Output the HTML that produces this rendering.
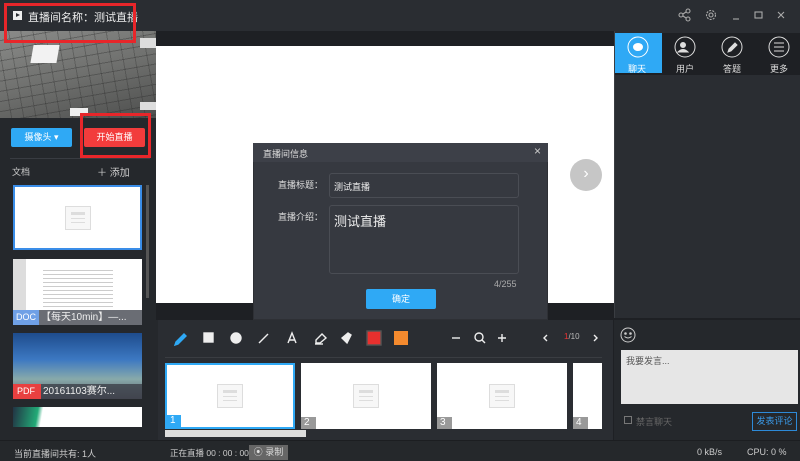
<!DOCTYPE html>
<html><head><meta charset="utf-8"><style>
*{margin:0;padding:0;box-sizing:border-box}
body{width:800px;height:461px;overflow:hidden;background:#25282c;font-family:"Liberation Sans","Noto Sans CJK SC",sans-serif;font-size:9px;color:#ddd;position:relative}
.a{position:absolute;white-space:nowrap}
.doc{background:#fff}
.ph{position:absolute;left:50%;top:50%;width:26px;height:24px;margin:-12px 0 0 -13px;border:1px solid #ddd;background:#f7f7f7}
.ph:before{content:"";position:absolute;left:5px;top:5px;width:14px;height:3px;background:#ddd}
.ph:after{content:"";position:absolute;left:5px;top:11px;width:14px;height:1px;background:#ddd;box-shadow:0 4px 0 #ddd}
</style></head><body>
<!-- title bar -->
<div class="a" style="left:0;top:0;width:800px;height:31px;background:#2a2d32"></div>
<div class="a" style="left:13px;top:11px;width:9px;height:9px;background:#eee"></div>
<div class="a" style="left:16px;top:13px;width:0;height:0;border-left:4px solid #2a2d32;border-top:2.5px solid transparent;border-bottom:2.5px solid transparent"></div>
<div class="a" style="left:28px;top:9px;font-size:11px;color:#eee">直播间名称：测试直播</div>
<svg class="a" style="left:676px;top:7px" width="124" height="18" viewBox="0 0 124 18" fill="none" stroke="#aaa" stroke-width="1.1">
<circle cx="5" cy="8" r="2"/><circle cx="12" cy="4" r="2"/><circle cx="12" cy="12" r="2"/><path d="M7 7l3-2M7 9l3 2"/>
<circle cx="35" cy="8" r="2"/><circle cx="35" cy="8" r="4.5" stroke-dasharray="2 1.2"/>
<path d="M57 12h6"/><rect x="79" y="5" width="7" height="6"/><path d="M102 5l6 6M108 5l-6 6"/>
</svg>
<!-- left panel -->
<div class="a" style="left:0;top:31px;width:156px;height:87px;background:repeating-linear-gradient(170deg,transparent 0,transparent 9px,rgba(40,40,40,.35) 9px,rgba(40,40,40,.35) 10px),repeating-linear-gradient(80deg,transparent 0,transparent 11px,rgba(40,40,40,.3) 11px,rgba(40,40,40,.3) 12px),linear-gradient(165deg,#8a8b89,#6f706e 50%,#4e4f4e 100%)"></div>
<div class="a" style="left:32px;top:45px;width:26px;height:18px;background:#f2f2f2;transform:skewX(-10deg)"></div>
<div class="a" style="left:140px;top:38px;width:16px;height:10px;background:#ddd"></div>
<div class="a" style="left:70px;top:108px;width:18px;height:8px;background:#eee"></div>
<div class="a" style="left:140px;top:102px;width:16px;height:8px;background:#ddd"></div>
<div class="a" style="left:11px;top:128px;width:61px;height:19px;background:#2fa9f5;border-radius:2px;color:#fff;text-align:center;line-height:19px">摄像头 ▾</div>
<div class="a" style="left:84px;top:128px;width:61px;height:19px;background:#f23c3c;border-radius:2px;color:#fff;text-align:center;line-height:19px">开始直播</div>
<div class="a" style="left:80px;top:113px;width:71px;height:45px;border:3px solid #e8262a"></div>
<div class="a" style="left:4px;top:3px;width:132px;height:40px;border:3px solid #e8262a"></div>
<div class="a" style="left:10px;top:158px;width:140px;height:1px;background:#393c42"></div>
<div class="a" style="left:12px;top:165px;color:#ccc">文档</div>
<div class="a" style="left:97px;top:164px;color:#ccc;font-size:10px">＋ 添加</div>
<div class="a" style="left:146px;top:185px;width:3px;height:113px;background:#555"></div>
<div class="a doc" style="left:13px;top:185px;width:129px;height:65px;border:2px solid #3a8de8"><div class="ph"></div></div>
<div class="a doc" style="left:13px;top:259px;width:129px;height:66px;background:linear-gradient(90deg,#ddd 0,#ddd 13px,#fff 13px)">
<div class="a" style="left:30px;top:8px;width:70px;height:40px;background:repeating-linear-gradient(#fff 0,#fff 3px,#ccc 3px,#ccc 4px)"></div>
<div class="a" style="left:0;bottom:0;width:129px;height:15px;background:rgba(80,84,92,.85);color:#eee;font-size:10px;line-height:15px;padding-left:28px">【每天10min】—...</div>
<div class="a" style="left:0;bottom:0;width:26px;height:15px;background:#6fa0e6;color:#fff;line-height:15px;padding-left:3px">DOC</div></div>
<div class="a" style="left:13px;top:333px;width:129px;height:66px;background:linear-gradient(#1e4c8c,#3c78c2 40%,#8aa 70%,#556)">
<div class="a" style="left:0;bottom:0;width:129px;height:15px;background:rgba(60,64,72,.8);color:#eee;font-size:10px;line-height:15px;padding-left:30px">20161103赛尔...</div>
<div class="a" style="left:0;bottom:0;width:28px;height:15px;background:#e84040;color:#fff;line-height:15px;padding-left:4px">PDF</div></div>
<div class="a doc" style="left:13px;top:407px;width:129px;height:20px;background:linear-gradient(100deg,#234 0,#2a7 25px,#fff 30px)"></div>
<!-- center -->
<div class="a" style="left:156px;top:31px;width:458px;height:289px;background:#1e2024"></div>
<div class="a" style="left:156px;top:46px;width:458px;height:257px;background:#fff"></div>
<div class="a" style="left:570px;top:159px;width:32px;height:32px;border-radius:50%;background:#c6c6c6;color:#fff;text-align:center;line-height:30px;font-size:16px">›</div>
<div class="a" style="left:158px;top:320px;width:456px;height:120px;background:#2a2d32"></div>
<svg class="a" style="left:170px;top:328px" width="440" height="20" viewBox="0 0 440 20" fill="none" stroke="#eee" stroke-width="1.4">
<path d="M6 14l8-8 2 2-8 8-3 1z" fill="#2fa9f5" stroke="#2fa9f5"/>
<rect x="34" y="5" width="9" height="9" fill="#eee"/><circle cx="66" cy="10" r="5" fill="#eee"/>
<path d="M89 15l9-9"/><path d="M118 15l4-10 4 10M119.5 12h5"/>
<path d="M146 12l6-6 4 4-6 5h-4z"/><path d="M145 16h8"/>
<path d="M172 10l5 5 4-8-3-2z" fill="#eee"/>
<rect x="197" y="3" width="14" height="14" fill="#e8302e" stroke="#555"/>
<rect x="224" y="3" width="14" height="14" fill="#f48a2e" stroke="none"/>
<path d="M282 10h8"/><circle cx="309" cy="9" r="4"/><path d="M312 12l3 3"/><path d="M328 10h8M332 6v8"/>
<path d="M377 7l-3 3 3 3"/><path d="M424 7l3 3-3 3"/>
</svg>
<div class="a" style="left:564px;top:332px;font-size:8px;color:#bbb"><span style="color:#e33">1</span>/10</div>
<div class="a" style="left:165px;top:357px;width:437px;height:1px;background:#3a3d42"></div>
<div class="a doc" style="left:165px;top:363px;width:130px;height:66px;border:2px solid #2fa9f5"><div class="ph"></div><div class="a" style="left:0;bottom:0;width:14px;height:12px;background:#2fa9f5;color:#fff;font-size:10px;padding-left:3px">1</div></div>
<div class="a doc" style="left:301px;top:363px;width:130px;height:66px"><div class="ph"></div><div class="a" style="left:0;bottom:0;width:15px;height:12px;background:#999;color:#fff;font-size:10px;padding-left:3px">2</div></div>
<div class="a doc" style="left:437px;top:363px;width:130px;height:66px"><div class="ph"></div><div class="a" style="left:0;bottom:0;width:15px;height:12px;background:#999;color:#fff;font-size:10px;padding-left:3px">3</div></div>
<div class="a doc" style="left:573px;top:363px;width:29px;height:66px"><div class="a" style="left:0;bottom:0;width:15px;height:12px;background:#999;color:#fff;font-size:10px;padding-left:3px">4</div></div>
<div class="a" style="left:165px;top:430px;width:141px;height:7px;background:#ddd"></div>
<!-- dialog -->
<div class="a" style="left:253px;top:143px;width:295px;height:177px;background:#363940;border:1px solid #2e3035"></div>
<div class="a" style="left:253px;top:143px;width:295px;height:19px;background:#3d4048"></div>
<div class="a" style="left:263px;top:147px;color:#ddd">直播间信息</div>
<div class="a" style="left:534px;top:144px;color:#ccc;font-size:12px">×</div>
<div class="a" style="left:278px;top:178px;color:#ddd">直播标题：</div>
<div class="a" style="left:329px;top:173px;width:190px;height:25px;border:1px solid #4a4d54;border-radius:3px;color:#eee;padding:6px 4px">测试直播</div>
<div class="a" style="left:278px;top:210px;color:#ddd">直播介绍：</div>
<div class="a" style="left:329px;top:205px;width:190px;height:69px;border:1px solid #4a4d54;border-radius:3px;color:#eee;font-size:13px;padding:5px 4px">测试直播</div>
<div class="a" style="left:494px;top:279px;color:#aaa">4/255</div>
<div class="a" style="left:366px;top:289px;width:70px;height:20px;background:#2fa9f5;border-radius:2px;color:#fff;text-align:center;line-height:20px">确定</div>
<!-- right -->
<div class="a" style="left:614px;top:31px;width:186px;height:289px;background:#2a2d32;border-left:1px solid #3a3d42"></div>
<div class="a" style="left:615px;top:33px;width:185px;height:42px;background:#1e2024"></div>
<div class="a" style="left:615px;top:33px;width:47px;height:40px;background:#2fa9f5"></div>
<svg class="a" style="left:615px;top:33px" width="185" height="40" viewBox="0 0 185 40" fill="none" stroke="#ddd" stroke-width="1">
<circle cx="23" cy="14" r="10" stroke="#fff"/><ellipse cx="23" cy="14" rx="5" ry="4" fill="#fff" stroke="none"/>
<circle cx="70" cy="14" r="10"/><circle cx="68" cy="12" r="2.5" fill="#ddd"/><path d="M63 19q5-5 10 0z" fill="#ddd"/>
<circle cx="117" cy="14" r="10"/><path d="M113 19l1-3 6-6 2 2-6 6z" fill="#ddd"/>
<circle cx="164" cy="14" r="10"/><path d="M159 10h10M159 14h10M159 18h10"/>
</svg>
<div class="a" style="left:628px;top:62px;color:#fff">聊天</div>
<div class="a" style="left:676px;top:62px;color:#ddd">用户</div>
<div class="a" style="left:723px;top:62px;color:#ddd">答题</div>
<div class="a" style="left:770px;top:62px;color:#ddd">更多</div>
<div class="a" style="left:614px;top:318px;width:186px;height:2px;background:#1e2024"></div>
<div class="a" style="left:613px;top:320px;width:1px;height:120px;background:#1e2024"></div>
<svg class="a" style="left:620px;top:327px" width="16" height="16" viewBox="0 0 16 16" fill="none" stroke="#ccc"><circle cx="8" cy="8" r="7"/><circle cx="5.5" cy="6.5" r=".8" fill="#ccc"/><circle cx="10.5" cy="6.5" r=".8" fill="#ccc"/><path d="M4.5 9.5q3.5 3 7 0"/></svg>
<div class="a" style="left:621px;top:350px;width:177px;height:54px;background:#e6e6e6;color:#555;padding:4px 5px">我要发言...</div>
<div class="a" style="left:624px;top:416px;width:8px;height:8px;border:1px solid #777"></div>
<div class="a" style="left:636px;top:415px;color:#666">禁言聊天</div>
<div class="a" style="left:752px;top:412px;width:45px;height:19px;border:1px solid #2d8ad8;color:#3a9ae8;text-align:center;line-height:17px">发表评论</div>
<!-- status -->
<div class="a" style="left:0;top:440px;width:800px;height:21px;background:#25282b;border-top:1px solid #1c1e21"></div>
<div class="a" style="left:14px;top:447px;color:#ccc">当前直播间共有: 1人</div>
<div class="a" style="left:170px;top:447px;color:#ccc;font-size:8.5px">正在直播 00 : 00 : 00</div>
<div class="a" style="left:249px;top:445px;width:39px;height:15px;background:#666;color:#ddd;text-align:center;line-height:15px">⦿ 录制</div>
<div class="a" style="left:697px;top:447px;color:#ccc">0 kB/s</div>
<div class="a" style="left:747px;top:447px;color:#ccc">CPU:  0 %</div>
</body></html>
